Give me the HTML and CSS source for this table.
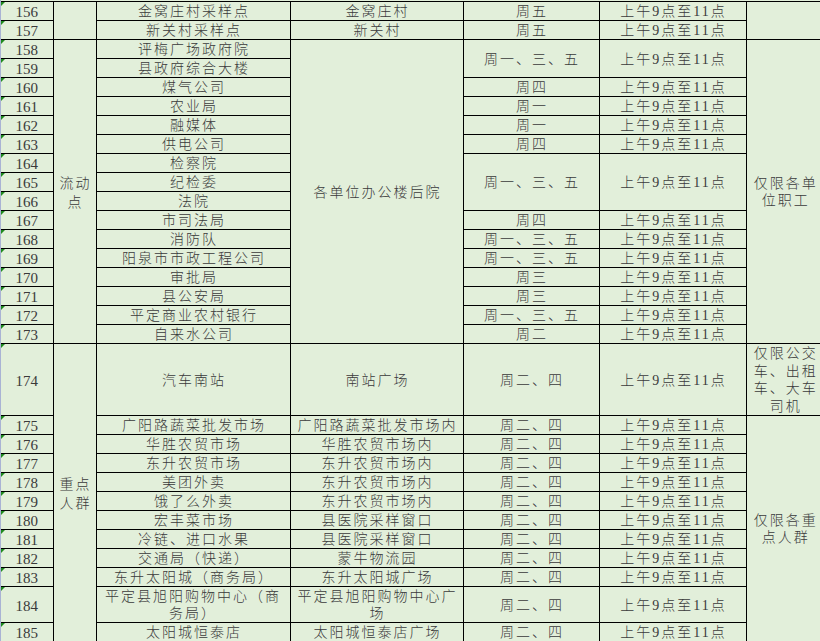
FILE: index.html
```html
<!DOCTYPE html>
<html lang="zh-CN">
<head>
<meta charset="utf-8">
<title>核酸采样点</title>
<link rel="stylesheet" href="styles.css">
</head>
<body>
<div class="sheet">
<table class="grid">
<colgroup>
<col class="c-no"><col class="c-cat"><col class="c-name"><col class="c-addr"><col class="c-day"><col class="c-time"><col class="c-note">
</colgroup>
<tbody>
<tr><td class="no">156</td><td class="cat" rowspan="2"></td><td>金窝庄村采样点</td><td>金窝庄村</td><td>周五</td><td>上午9点至11点</td><td class="note" rowspan="2"></td></tr>
<tr><td class="no">157</td><td>新关村采样点</td><td>新关村</td><td>周五</td><td>上午9点至11点</td></tr>
<tr><td class="no">158</td><td class="cat" rowspan="16">流动点</td><td>评梅广场政府院</td><td rowspan="16">各单位办公楼后院</td><td rowspan="2">周一、三、五</td><td rowspan="2">上午9点至11点</td><td class="note" rowspan="16">仅限各单位职工</td></tr>
<tr><td class="no">159</td><td>县政府综合大楼</td></tr>
<tr><td class="no">160</td><td>煤气公司</td><td>周四</td><td>上午9点至11点</td></tr>
<tr><td class="no">161</td><td>农业局</td><td>周一</td><td>上午9点至11点</td></tr>
<tr><td class="no">162</td><td>融媒体</td><td>周一</td><td>上午9点至11点</td></tr>
<tr><td class="no">163</td><td>供电公司</td><td>周四</td><td>上午9点至11点</td></tr>
<tr><td class="no">164</td><td>检察院</td><td rowspan="3">周一、三、五</td><td rowspan="3">上午9点至11点</td></tr>
<tr><td class="no">165</td><td>纪检委</td></tr>
<tr><td class="no">166</td><td>法院</td></tr>
<tr><td class="no">167</td><td>市司法局</td><td>周四</td><td>上午9点至11点</td></tr>
<tr><td class="no">168</td><td>消防队</td><td>周一、三、五</td><td>上午9点至11点</td></tr>
<tr><td class="no">169</td><td>阳泉市市政工程公司</td><td>周一、三、五</td><td>上午9点至11点</td></tr>
<tr><td class="no">170</td><td>审批局</td><td>周三</td><td>上午9点至11点</td></tr>
<tr><td class="no">171</td><td>县公安局</td><td>周三</td><td>上午9点至11点</td></tr>
<tr><td class="no">172</td><td>平定商业农村银行</td><td>周一、三、五</td><td>上午9点至11点</td></tr>
<tr><td class="no">173</td><td>自来水公司</td><td>周二</td><td>上午9点至11点</td></tr>
<tr class="tall"><td class="no">174</td><td class="cat" rowspan="12">重点人群</td><td>汽车南站</td><td>南站广场</td><td>周二、四</td><td>上午9点至11点</td><td class="note">仅限公交车、出租车、大车司机</td></tr>
<tr><td class="no">175</td><td>广阳路蔬菜批发市场</td><td>广阳路蔬菜批发市场内</td><td>周二、四</td><td>上午9点至11点</td><td class="note" rowspan="11">仅限各重点人群</td></tr>
<tr><td class="no">176</td><td>华胜农贸市场</td><td>华胜农贸市场内</td><td>周二、四</td><td>上午9点至11点</td></tr>
<tr><td class="no">177</td><td>东升农贸市场</td><td>东升农贸市场内</td><td>周二、四</td><td>上午9点至11点</td></tr>
<tr><td class="no">178</td><td>美团外卖</td><td>东升农贸市场内</td><td>周二、四</td><td>上午9点至11点</td></tr>
<tr><td class="no">179</td><td>饿了么外卖</td><td>东升农贸市场内</td><td>周二、四</td><td>上午9点至11点</td></tr>
<tr><td class="no">180</td><td>宏丰菜市场</td><td>县医院采样窗口</td><td>周二、四</td><td>上午9点至11点</td></tr>
<tr><td class="no">181</td><td>冷链、进口水果</td><td>县医院采样窗口</td><td>周二、四</td><td>上午9点至11点</td></tr>
<tr><td class="no">182</td><td>交通局（快递）</td><td>蒙牛物流园</td><td>周二、四</td><td>上午9点至11点</td></tr>
<tr><td class="no">183</td><td>东升太阳城（商务局）</td><td>东升太阳城广场</td><td>周二、四</td><td>上午9点至11点</td></tr>
<tr class="double"><td class="no">184</td><td class="name-wrap">平定县旭阳购物中心（商<br>务局）</td><td class="addr-wrap">平定县旭阳购物中心广场</td><td>周二、四</td><td>上午9点至11点</td></tr>
<tr><td class="no">185</td><td>太阳城恒泰店</td><td>太阳城恒泰店广场</td><td>周二、四</td><td>上午9点至11点</td></tr>
</tbody>
</table>
</div>
</body>
</html>
```

FILE: styles.css
```css
html, body {
  margin: 0;
  padding: 0;
  background: #e2efda;
  overflow: hidden;
}
body {
  width: 820px;
  height: 641px;
}
.sheet {
  border-left: 1px solid #a9b3d4;
  padding-top: 1px;
  height: 640px;
  overflow: hidden;
}
.grid {
  border-collapse: collapse;
  table-layout: fixed;
  width: 820px;
  font-family: "Liberation Serif", "Noto Sans CJK SC", serif;
  font-size: 14px;
  font-weight: 300;
  color: #3a3a3a;
  background: #e2efda;
}
.c-no { width: 52px; }
.c-cat { width: 43px; }
.c-name { width: 194px; }
.c-addr { width: 173px; }
.c-day { width: 136px; }
.c-time { width: 147px; }
.c-note { width: 75px; }
.grid tr { height: 19px; }
.grid tr.tall { height: 72px; }
.grid tr.double { height: 36px; }
.grid td {
  border: 1px solid #000;
  padding: 2px 4px 0 6px;
  text-align: center;
  vertical-align: middle;
  line-height: 16px;
  letter-spacing: 2px;
  white-space: normal;
  overflow: hidden;
}
.grid td.no {
  position: relative;
  border-left: none;
  font-size: 15px;
  letter-spacing: 0;
  padding: 2px 0 0 0;
}
.grid td.no::before {
  content: "";
  position: absolute;
  top: 0;
  left: 0;
  width: 0;
  height: 0;
  border-top: 4px solid #1f8a1f;
  border-right: 4px solid transparent;
}
.grid td.cat {
  padding: 2px 3px 0 5px;
  line-height: 19px;
}
.grid td.note {
  padding: 1px 2px 0 6px;
  border-right: none;
  line-height: 17.5px;
}
.grid td.name-wrap,
.grid td.addr-wrap {
  line-height: 17px;
  padding-top: 0;
}
.grid td.name-wrap {
  padding-left: 4px;
  padding-right: 4px;
}
.grid td.addr-wrap {
  padding-left: 6px;
  padding-right: 4px;
}
```
